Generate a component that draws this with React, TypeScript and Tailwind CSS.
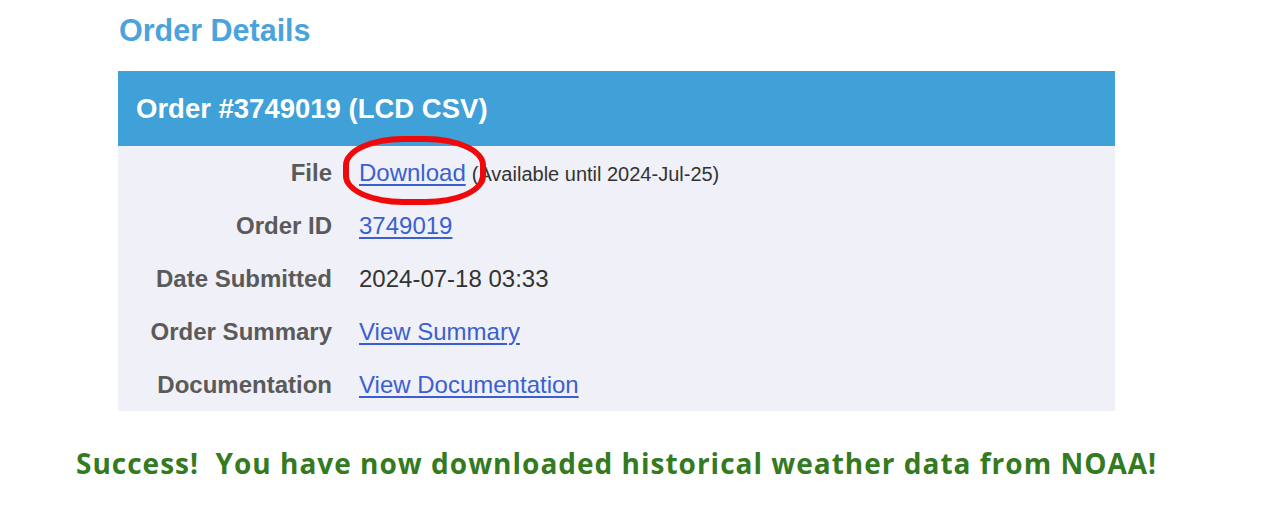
import React from "react";

function Link({ children }: { children: React.ReactNode }) {
  return <a href="#" className="text-[#3b5fd1] underline underline-offset-[3px] decoration-[1.5px]">{children}</a>;
}

export default function App() {
  const items = [
    {
      label: "File",
      value: (
        <div className="relative flex items-baseline">
          <div className="absolute left-[-16px] top-[-19px] w-[143px] h-[69px] border-[6px] border-[#ee0a0a] rounded-[42%]" />
          <Link>Download</Link>
          <span className="ml-[6px] text-[20px] text-[#333]">(Available until 2024-Jul-25)</span>
        </div>
      ),
    },
    { label: "Order ID", value: <Link>3749019</Link> },
    { label: "Date Submitted", value: <span className="text-[#333]">2024-07-18 03:33</span> },
    { label: "Order Summary", value: <Link>View Summary</Link> },
    { label: "Documentation", value: <Link>View Documentation</Link> },
  ];
  return (
    <div className="w-[1272px] h-[518px] bg-white overflow-hidden" style={{ fontFamily: '"Liberation Sans", Arial, sans-serif' }}>
      <div className="pl-[118px] pr-[157px]">
        <h1 className="pt-[13px] h-[71px] text-[30.5px] font-bold text-[#4ba3dc] leading-[34px] pl-[1px]">Order Details</h1>
        <div>
          <div className="h-[75px] bg-[#40a0d8] flex items-center pl-[18px] text-white font-bold text-[27.5px]">
            Order #3749019 (LCD CSV)
          </div>
          <div className="bg-[#f0f0f8]">
            {items.map((it) => (
              <div key={it.label} className="h-[53px] flex items-center text-[24px]">
                <div className="w-[214px] text-right font-bold text-[#5a5a5a]">{it.label}</div>
                <div className="ml-[27px]">{it.value}</div>
              </div>
            ))}
          </div>
        </div>
      </div>
      <div
        className="pl-[76px] mt-[36px] text-[28px] tracking-[1px] font-bold text-[#347a1e] leading-[32px] whitespace-nowrap"
        style={{ fontFamily: '"Open Sans", "Noto Sans", sans-serif' }}
      >
        Success!&nbsp; You have now downloaded historical weather data from NOAA!
      </div>
    </div>
  );
}
